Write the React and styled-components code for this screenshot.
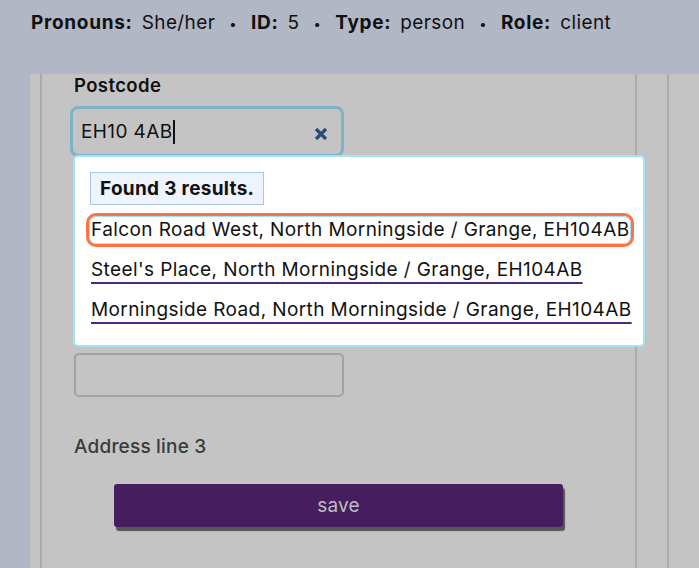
import React from 'react'
import styled, { createGlobalStyle } from 'styled-components'

const GlobalStyle = createGlobalStyle`
  html, body {
    margin: 0;
    background: #b1b7c4;
    font-family: Inter, "Noto Sans", sans-serif;
    color: #111;
  }
  * { box-sizing: border-box; }
`

const Header = styled.div`
  height: 74px;
  padding: 11px 31px 0;
  display: flex;
  align-items: baseline;
  font-size: 19px;
  letter-spacing: 0.4px;
  color: #111;
  white-space: nowrap;
`

const Pair = styled.span`
  display: inline-flex;
  align-items: baseline;
  gap: 9px;
`

const Key = styled.b`
  font-weight: 700;
  letter-spacing: 0.7px;
`

const Dot = styled.span`
  margin: 0 14px;
  font-size: 13px;
`

const Stage = styled.div`
  display: flex;
  margin-left: 30px;
  background: #c4c4c4;
  min-height: calc(100vh - 74px);
`

const Panel = styled.div`
  margin-left: ${props => props.offset}px;
  width: ${props => props.width ? `${props.width}px` : 'auto'};
  flex: ${props => props.width ? 'none' : '1'};
  border-left: 2px solid #ababab;
  border-right: ${props => props.width ? '2px solid #ababab' : 'none'};
`

const Form = styled.div`
  padding: 0 32px;
  display: flex;
  flex-direction: column;
`

const Group = styled.div`
  margin-top: ${props => props.gap}px;
  display: flex;
  flex-direction: column;
  gap: 10px;
`

const Label = styled.label`
  font-size: ${props => props.plain ? 19 : 18.5}px;
  line-height: 22px;
  letter-spacing: ${props => props.plain ? 0.2 : 0.4}px;
  font-weight: ${props => props.plain ? 500 : 600};
  color: ${props => props.plain ? '#3a3a3a' : '#111'};
`

const Field = styled.div`
  position: relative;
  width: ${props => props.focused ? 274 : 270}px;
  height: ${props => props.focused ? 51 : 44}px;
  margin-left: ${props => props.focused ? -4 : 0}px;
  border: ${props => props.focused ? '3px solid #7fb2c9' : '2px solid #a2a2a2'};
  border-radius: ${props => props.focused ? 8 : 5}px;
  display: flex;
  align-items: center;
  padding: 0 0 0 8px;
  font-size: 19px;
  letter-spacing: 0.4px;
`

const Caret = styled.span`
  display: inline-block;
  width: 2px;
  height: 24px;
  background: #111;
`

const Clear = styled.svg`
  position: absolute;
  right: 13px;
  top: 18px;
`

const Dropdown = styled.div`
  position: absolute;
  top: 46px;
  left: 0;
  width: 572px;
  height: 192px;
  background: #fff;
  border: 2px solid #a3e3f7;
  border-radius: 5px;
  padding: 15px 10px 0 15px;
  z-index: 2;
  letter-spacing: 0.4px;
  white-space: nowrap;
`

const Found = styled.div`
  display: inline-block;
  height: 33px;
  line-height: 31px;
  padding: 0 9px;
  border: 1px solid #a9c6ea;
  background: #eef4fd;
  font-weight: 700;
  font-size: 19px;
  letter-spacing: 0.3px;
`

const Options = styled.div`
  display: flex;
  flex-direction: column;
  align-items: flex-start;
  gap: 14px;
  margin-top: 12px;
`

const Option = styled.a`
  display: block;
  font-size: 19px;
  line-height: 26px;
  color: #111;
  border-radius: 6px;
  padding-left: 1px;
  text-decoration: ${props => props.active ? 'none' : 'underline'};
  text-decoration-color: #4b2a7d;
  text-decoration-thickness: 2px;
  text-underline-offset: 6px;
  outline: ${props => props.active ? '3px solid #ff7343' : 'none'};
  outline-offset: 1px;
  box-shadow: ${props => props.active ? '0 0 0 1px #a3e3f7' : 'none'};
`

const SaveButton = styled.button`
  margin: 26px auto 0;
  width: 449px;
  height: 43px;
  border: none;
  border-radius: 3px;
  background: #461d5f;
  color: #bdbdbd;
  font-family: Inter, sans-serif;
  font-size: 19px;
  letter-spacing: 0.2px;
  box-shadow: 2px 4px 1px #555;
`

const results = [
  'Falcon Road West, North Morningside / Grange, EH104AB',
  "Steel's Place, North Morningside / Grange, EH104AB",
  'Morningside Road, North Morningside / Grange, EH104AB',
]

const meta = [
  ['Pronouns:', 'She/her'],
  ['ID:', '5'],
  ['Type:', 'person'],
  ['Role:', 'client'],
]

const App = () => (
  <>
    <GlobalStyle />
    <Header>
      {meta.map(([k, v], i) => (
        <React.Fragment key={k}>
          {i > 0 && <Dot>•</Dot>}
          <Pair><Key>{k}</Key>{v}</Pair>
        </React.Fragment>
      ))}
    </Header>
    <Stage>
      <Panel offset={10} width={597}>
        <Form>
          <Group gap={0}>
            <Label>Postcode</Label>
            <Field focused>
              EH10 4AB<Caret />
              <Clear width="14" height="14" viewBox="0 0 14 14">
                <path d="M2 2 L12 12 M12 2 L2 12" stroke="#2d4a7c" strokeWidth="3.2" />
              </Clear>
              <Dropdown>
                <Found>Found 3 results.</Found>
                <Options>
                  {results.map((r, i) => (
                    <Option key={i} active={i === 0} href="#">{r}</Option>
                  ))}
                </Options>
              </Dropdown>
            </Field>
          </Group>
          <Group gap={44}>
            <Label>Address line 1</Label>
            <Field />
          </Group>
          <Group gap={44}>
            <Label>Address line 2</Label>
            <Field />
          </Group>
          <Group gap={39}>
            <Label plain>Address line 3</Label>
          </Group>
          <SaveButton>save</SaveButton>
        </Form>
      </Panel>
      <Panel offset={30} />
    </Stage>
  </>
)

export default App
